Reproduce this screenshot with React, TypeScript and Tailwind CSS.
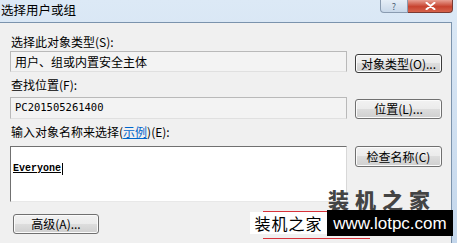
import React from "react";

const cjk = "font-['Noto_Sans_CJK_SC',sans-serif]";

const Btn = ({ label, className = "" }: { label: string; className?: string }) => (
  <div
    className={`flex items-center justify-center rounded-[3px] border border-[#707070] bg-[linear-gradient(to_bottom,#f2f2f2_0%,#ebebeb_50%,#dddddd_50%,#cfcfcf_100%)] shadow-[inset_0_0_0_1px_#fbfbfb] text-[12px] leading-none text-black ${className}`}
  >
    {label}
  </div>
);

export default function App() {
  return (
    <div
      className={`relative w-[457px] h-[243px] overflow-hidden bg-[linear-gradient(to_bottom,#dce9f6,#c4d7ec)] ${cjk}`}
    >
      {/* title bar */}
      <div className="flex h-[22px] items-start justify-between">
        <span className="pl-[1px] pt-[3px] text-[12.5px] leading-[14px] text-black">选择用户或组</span>
        <div className="mr-[4px] flex">
          <div className="flex h-[13px] w-[28px] items-center justify-center rounded-bl-[4px] border border-t-0 border-[#8a9bb0] bg-[linear-gradient(to_bottom,#e6eef7,#c9d8e9)] text-[9px] leading-none text-[#4a5d75]">
            ?
          </div>
          <div className="flex h-[13px] w-[45px] items-center justify-center rounded-br-[4px] border border-t-0 border-l-0 border-[#7a3a33] bg-[linear-gradient(to_bottom,#e8a093,#c7432f_55%,#d6634c)]">
            <svg width="11" height="8" viewBox="0 0 11 8">
              <path d="M1.5 0.8 L9.5 7.2 M9.5 0.8 L1.5 7.2" stroke="#fff" strokeWidth="2" strokeLinecap="round" />
            </svg>
          </div>
        </div>
      </div>

      <div className="flex h-[221px]">
        {/* dialog body */}
        <div className="flex w-[452px] flex-col border-t border-r border-[#7b93ad] bg-[#f0f0f0] pl-[10px]">
          <div className="mt-[12px] h-[14px] pl-[1px] text-[12px] leading-[14px] text-black">
            选择此对象类型(S):
          </div>
          <div className="mt-[2px] flex items-start">
            <div className="flex h-[21px] w-[337px] items-center border border-[#b9b9b9] border-b-[#e0e0e0] bg-[#f3f3f3] pl-[4px] text-[12px] text-black">
              用户、组或内置安全主体
            </div>
            <Btn label="对象类型(O)..." className="ml-[8px] mt-[3px] h-[19px] w-[87px] !border-[#3c3c3c]" />
          </div>

          <div className="mt-[5px] h-[14px] pl-[1px] text-[12px] leading-[14px] text-black">
            查找位置(F):
          </div>
          <div className="mt-[5px] flex items-start">
            <div className="flex h-[22px] w-[337px] items-center border border-[#b9b9b9] border-b-[#e0e0e0] bg-[#f3f3f3] pl-[4px] font-['DejaVu_Sans_Mono',monospace] text-[10.5px] text-black">
              PC201505261400
            </div>
            <Btn label="位置(L)..." className="ml-[8px] mt-[2px] h-[20px] w-[87px]" />
          </div>

          <div className="mt-[6px] h-[14px] pl-[1px] text-[12px] leading-[14px] text-black">
            输入对象名称来选择(<span className="text-[#0066cc] underline">示例</span>)(E):
          </div>
          <div className="mt-[7px] flex items-start">
            <div className="h-[56px] w-[337px] border border-[#707070] border-r-[#d8d8d8] border-b-[#e8e8e8] bg-white pl-[2px] pt-[5px]">
              <span className="inline-block border-r border-black pr-[1px] font-['Liberation_Mono',monospace] text-[10px] font-bold leading-[12px] text-black underline">
                Everyone
              </span>
            </div>
            <Btn label="检查名称(C)" className="ml-[8px] h-[21px] w-[87px]" />
          </div>

          <Btn label="高级(A)..." className="ml-[3px] mt-[12px] h-[20px] w-[86px]" />
        </div>
        <div className="flex-1" />
      </div>

      {/* watermark overlay */}
      <div className="absolute left-[328px] top-[187px] text-[21px] font-black leading-[24px] tracking-[6px] text-[#444444]">
        装机之家
      </div>
      <div className="absolute left-[263px] top-[211px] h-[1px] w-[107px] bg-[#d8323a]" />
      <div className="absolute left-[263px] top-[238px] h-[1px] w-[107px] bg-[#d8323a]" />
      <div className="absolute left-[250px] top-[212px] flex h-[22px] w-[77px] items-center justify-center bg-white text-[16px] leading-none tracking-[1px] text-black">
        装机之家
      </div>
      <div className="absolute left-[327px] top-[210px] flex h-[26px] w-[126px] items-center justify-center bg-black font-['Liberation_Sans',sans-serif] text-[17px] leading-none text-white">
        www.lotpc.com
      </div>
    </div>
  );
}
